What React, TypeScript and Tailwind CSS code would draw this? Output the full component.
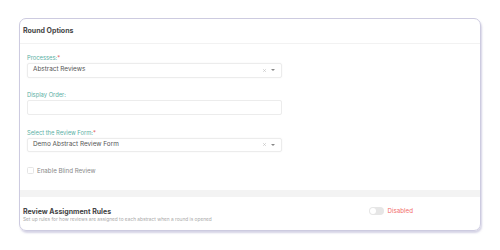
import { X } from "lucide-react";

const Label = ({ text }: { text: string }) => (
	<div className="text-[5.8px] leading-[7px] text-[#5ab0a4] mb-[2px]">
		{text}
		<span className="text-[#e05a5a]">*</span>
	</div>
);

const SelectBox = ({ value }: { value: string }) => (
	<div className="h-[14.5px] w-[255px] border border-[#ececec] rounded-[2px] shadow-[0_0_2px_rgba(0,0,0,0.05)] flex items-center pl-[5px] pr-[6px]">
		<span className="flex-1 text-[6.4px] text-[#555]">{value}</span>
		<X size={5} strokeWidth={2} className="text-[#aaa] mr-[4px]" />
		<span className="w-0 h-0 border-l-[2.5px] border-r-[2.5px] border-t-[2.5px] border-l-transparent border-r-transparent border-t-[#888]" />
	</div>
);

export default function App() {
	return (
		<div className="w-[500px] h-[250px] bg-white pt-[18px] pl-[19px]" style={{ fontFamily: "Inter, 'Noto Sans', sans-serif" }}>
			<div className="w-[462px] h-[213px] rounded-[7px] border-[1.5px] border-[#cdcbe0] shadow-[1px_2px_2px_rgba(150,145,190,0.4)] overflow-hidden flex flex-col">
				<div className="h-[25px] flex items-center px-[3px] border-b border-[#f2f2f2]">
					<span className="text-[7px] font-bold text-[#444]">Round Options</span>
				</div>

				<div className="flex-1 pl-[7px] pt-[10px]">
					<Label text="Processes:" />
					<SelectBox value="Abstract Reviews" />

					<div className="text-[5.8px] leading-[7px] text-[#5ab0a4] mt-[13.5px] mb-[2px]">Display Order:</div>
					<div className="h-[15px] w-[255px] border border-[#ececec] rounded-[2px]" />

					<div className="mt-[13.5px]">
						<Label text="Select the Review Form:" />
					</div>
					<SelectBox value="Demo Abstract Review Form" />

					<div className="flex items-center mt-[14px] gap-[3px]">
						<span className="w-[7px] h-[7px] border border-[#e5e5e5] rounded-[1.5px]" />
						<span className="text-[6.2px] text-[#888]">Enable Blind Review</span>
					</div>
				</div>

				<div className="h-[7px] bg-[#f3f3f3]" />

				<div className="h-[33px] flex items-center px-[3px]">
					<div className="flex-1 pt-[3px]">
						<div className="text-[7px] font-bold text-[#444] leading-[8px]">Review Assignment Rules</div>
						<div className="text-[4.8px] text-[#aaa] leading-[7px]">
							Set up rules for how reviews are assigned to each abstract when a round is opened
						</div>
					</div>
					<div className="flex items-center gap-[4px] mr-[64px] -mt-[5px]">
						<span className="w-[15px] h-[8px] rounded-full bg-[#e6e6e6] flex items-center pl-[1px]">
							<span className="w-[6px] h-[6px] rounded-full bg-white" />
						</span>
						<span className="text-[6.2px] text-[#f26b6b]">Disabled</span>
					</div>
				</div>
			</div>
		</div>
	);
}
